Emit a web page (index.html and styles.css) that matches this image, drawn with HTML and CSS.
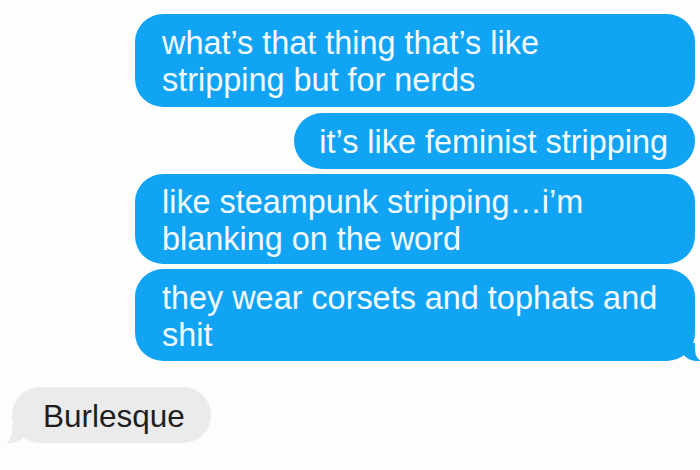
FILE: index.html
```html
<!DOCTYPE html>
<html>
<head>
<meta charset="utf-8">
<link rel="stylesheet" href="styles.css">
</head>
<body>
<div class="thread">
  <div class="bubble sent wide b1">what’s that thing that’s like<br>stripping but for nerds</div>
  <div class="bubble sent b2">it’s like feminist stripping</div>
  <div class="bubble sent wide b3">like steampunk stripping…i’m<br>blanking on the word</div>
  <div class="bubble sent wide b4 tail">they wear corsets and tophats and<br>shit</div>
  <div class="bubble recv tail">Burlesque</div>
</div>
</body>
</html>
```
FILE: styles.css
```css
html, body {
  margin: 0;
  background: #fdfdfd;
}
.thread {
  width: 700px;
  height: 470px;
  box-sizing: border-box;
  padding: 14px 5px 0 12px;
  display: flex;
  flex-direction: column;
  font-family: "Liberation Sans", Arial, sans-serif;
  font-size: 31.5px;
  line-height: 37px;
}
.bubble {
  position: relative;
  border-radius: 28px;
  padding: 11px 27px 8px 27px;
  box-sizing: border-box;
  white-space: nowrap;
}
.sent {
  align-self: flex-end;
  background: #12a4f4;
  color: #f3fbff;
  margin-bottom: 6px;
  font-size: 32.4px;
}
.wide {
  width: 560px;
}
.b2 {
  padding-left: 25px;
  margin-bottom: 5px;
}
.b3 {
  padding-top: 10px;
  padding-bottom: 6px;
  margin-bottom: 5px;
}
.b4 {
  padding-top: 11px;
  padding-bottom: 7px;
}
.sent.tail::after {
  content: "";
  position: absolute;
  right: -6px;
  bottom: 0;
  width: 20px;
  height: 18px;
  background: #12a4f4;
  border-bottom-left-radius: 16px 14px;
}
.sent.tail::before {
  content: "";
  position: absolute;
  right: -10px;
  bottom: -1px;
  width: 10px;
  height: 20px;
  background: #fdfdfd;
  border-bottom-left-radius: 10px 12px;
  z-index: 1;
}
.recv {
  align-self: flex-start;
  margin-top: 20px;
  background: #ebebeb;
  color: #1e1e1e;
  padding: 11px 26px 8px 31px;
}
.recv.tail::after {
  content: "";
  position: absolute;
  left: -6px;
  bottom: 0;
  width: 20px;
  height: 18px;
  background: #ebebeb;
  border-bottom-right-radius: 16px 14px;
}
.recv.tail::before {
  content: "";
  position: absolute;
  left: -10px;
  bottom: -1px;
  width: 10px;
  height: 20px;
  background: #fdfdfd;
  border-bottom-right-radius: 10px 12px;
  z-index: 1;
}
```
